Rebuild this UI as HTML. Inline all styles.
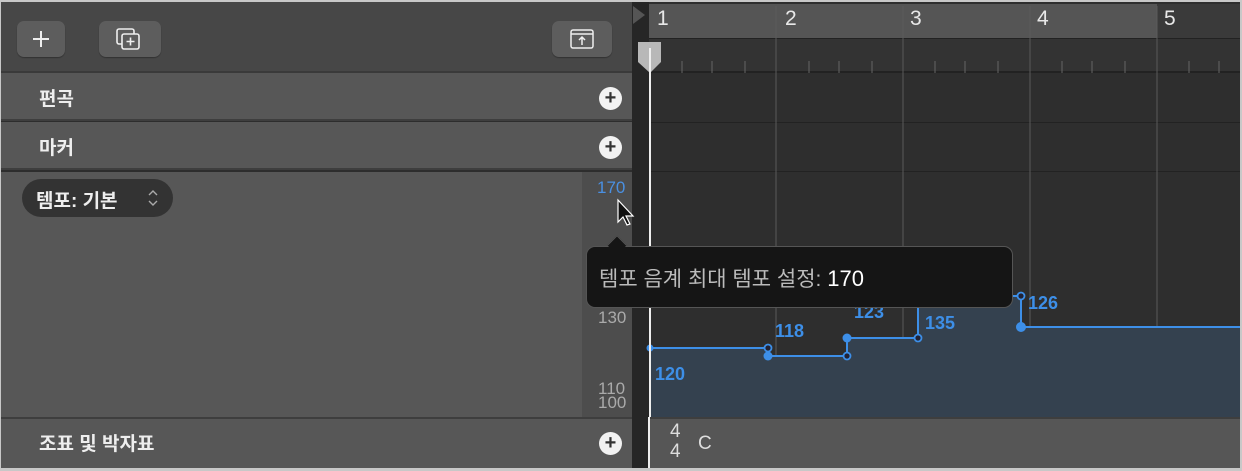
<!DOCTYPE html>
<html><head><meta charset="utf-8"><style>
*{margin:0;padding:0;box-sizing:border-box}
body{width:1242px;height:471px;overflow:hidden;background:#c8c8c8;font-family:"Liberation Sans","Noto Sans CJK KR",sans-serif;position:relative}
.a{position:absolute}
.btn{position:absolute;top:19px;height:36px;background:#5d5d5d;border-radius:7px;box-shadow:0 1px 1px rgba(0,0,0,.3)}
.lbl{position:absolute;left:38px;color:#eee;font-size:19px;font-weight:bold}
.plus{position:absolute;left:598px;width:23px;height:23px;border-radius:50%;background:#f2f2f2;color:#333;font-size:20px;line-height:22px;text-align:center;font-weight:bold}
.m{position:absolute;top:5px;color:#e8e8e8;font-size:21px}
</style></head><body>
<div class="a" style="left:1px;top:2px;width:1239px;height:466px;background:#2d2d2d;overflow:hidden">
<div class="a" style="left:0;top:0;width:631px;height:71px;background:#474747;border-bottom:2px solid #3a3a3a"></div>
<div class="btn" style="left:16px;width:48px"><svg width="48" height="36"><path d="M24 10v16M16 18h16" stroke="#eee" stroke-width="2"/></svg></div>
<div class="btn" style="left:98px;width:62px"><svg width="62" height="36"><rect x="18" y="8" width="17" height="15" rx="2" fill="none" stroke="#eee" stroke-width="1.6"/><rect x="23" y="13" width="17" height="15" rx="2" fill="#5d5d5d" stroke="#eee" stroke-width="1.6"/><path d="M31.5 16.5v8M27.5 20.5h8" stroke="#eee" stroke-width="1.6"/></svg></div>
<div class="btn" style="left:551px;width:60px"><svg width="60" height="36"><rect x="19" y="9" width="22" height="18" rx="2" fill="none" stroke="#eee" stroke-width="1.5"/><path d="M19 13h22M30 24v-8M27 19l3-3 3 3" stroke="#eee" stroke-width="1.5" fill="none"/></svg></div>
<div class="a" style="left:0;top:71px;width:631px;height:48px;background:#575757;border-bottom:2px solid #3e3e3e"></div>
<div class="lbl" style="top:82px">편곡</div><div class="plus" style="top:85px">+</div>
<div class="a" style="left:0;top:120px;width:631px;height:48px;background:#575757;border-bottom:2px solid #3e3e3e"></div>
<div class="lbl" style="top:131px">마커</div><div class="plus" style="top:134px">+</div>
<div class="a" style="left:0;top:170px;width:631px;height:245px;background:#575757"></div>
<div class="a" style="left:581px;top:170px;width:50px;height:245px;background:#4d4d4d"></div>
<div class="a" style="left:21px;top:177px;width:151px;height:38px;border-radius:19px;background:#333;color:#eee;font-size:19px;font-weight:bold;padding:7px 0 0 14px">템포: 기본</div>
<svg class="a" style="left:145px;top:186px" width="14" height="20"><path d="M3 7l4-4 4 4M3 13l4 4 4-4" stroke="#aaa" stroke-width="1.4" fill="none"/></svg>
<div class="a" style="left:596px;top:176px;color:#4a90e2;font-size:17px">170</div>
<div class="a" style="left:597px;top:306px;color:#aaa;font-size:17px">130</div>
<div class="a" style="left:597px;top:377px;color:#aaa;font-size:17px">110</div>
<div class="a" style="left:597px;top:391px;color:#aaa;font-size:17px">100</div>
<div class="a" style="left:0;top:415px;width:631px;height:51px;background:#575757;border-top:2px solid #3e3e3e"></div>
<div class="lbl" style="top:427px">조표 및 박자표</div><div class="plus" style="top:430px">+</div>
<div class="a" style="left:631px;top:0;width:17px;height:466px;background:#262626"></div>
<div class="a" style="left:648px;top:0;width:591px;height:466px;background:#2e2e2e"></div>
<div class="a" style="left:648px;top:2px;width:508px;height:34px;background:#555"></div>
<div class="a" style="left:1156px;top:2px;width:84px;height:34px;background:#3a3a3a"></div>
<div class="a" style="left:648px;top:36px;width:591px;height:35px;background:#333;border-top:1px solid #222;border-bottom:2px solid #222"></div>
<div class="a" style="left:648px;top:120px;width:591px;height:1px;background:#222"></div>
<div class="a" style="left:648px;top:169px;width:591px;height:1px;background:#222"></div>
<div class="a" style="left:632px;top:4px;width:0;height:0;border-top:9px solid transparent;border-bottom:9px solid transparent;border-left:12px solid #555"></div>
<div class="m" style="left:656px">1</div><div class="m" style="left:784px">2</div><div class="m" style="left:909px">3</div><div class="m" style="left:1036px">4</div><div class="m" style="left:1163px">5</div>
<svg class="a" style="left:0;top:0" width="1240" height="466">
<g stroke="#5a5a5a" stroke-width="1"><path d="M775 4V415M902 4V415M1029 4V415M1156 4V415"/></g>
<g stroke="#666" stroke-width="1"><path d="M681 59v12M711 59v12M744 59v12M808 59v12M838 59v12M871 59v12M934 59v12M964 59v12M997 59v12M1061 59v12M1091 59v12M1124 59v12M1188 59v12M1218 59v12"/></g>
<path d="M648 346H767V354H846V336H917V294H1020V325H1240V415H648Z" fill="#34414f"/>
<path d="M648 346H767V354H846V336H917V294H1020V325H1240" fill="none" stroke="#3d8fe8" stroke-width="2"/>
<g fill="#3d8fe8"><circle cx="767" cy="354" r="4.5"/><circle cx="846" cy="336" r="4.5"/><circle cx="1020" cy="325" r="5"/><circle cx="649" cy="346" r="3.5"/></g>
<g fill="#223" stroke="#3d8fe8" stroke-width="1.8"><circle cx="767" cy="346" r="3.5"/><circle cx="846" cy="354" r="3.5"/><circle cx="917" cy="336" r="3.5"/><circle cx="1020" cy="294" r="3.5"/></g>
<g fill="#3d8fe8" font-family="Liberation Sans" font-weight="bold" font-size="18"><text x="654" y="378">120</text><text x="774" y="335">118</text><text x="853" y="316">123</text><text x="924" y="327">135</text><text x="1027" y="307">126</text></g>
<path d="M637 40h23v20l-11 11-12-11z" fill="#b8b8b8"/>
<path d="M649 46V466" stroke="#eee" stroke-width="2"/>
<path d="M617 198v22l5-5 4 8 3-1-4-8h7z" fill="#111" stroke="#fff" stroke-width="1.2"/>
</svg>
<div class="a" style="left:585px;top:244px;width:427px;height:62px;background:#151515;border:1px solid #555;border-radius:9px;color:#bbb;font-size:21px;padding:16px 0 0 12px">템포 음계 최대 템포 설정: <span style="color:#fff;font-size:22px">170</span></div>
<div class="a" style="left:609px;top:236px;width:14px;height:14px;background:#151515;border-left:1px solid #555;border-top:1px solid #555;transform:rotate(45deg)"></div>
<div class="a" style="left:648px;top:415px;width:591px;height:51px;background:#565656;border-top:2px solid #3e3e3e"></div>
<div class="a" style="left:647px;top:415px;width:2px;height:51px;background:#eee"></div>
<div class="a" style="left:669px;top:420px;color:#ddd;font-size:19px;line-height:20px">4<br>4</div>
<div class="a" style="left:697px;top:431px;color:#ddd;font-size:19px">C</div>
</div>
</body></html>
